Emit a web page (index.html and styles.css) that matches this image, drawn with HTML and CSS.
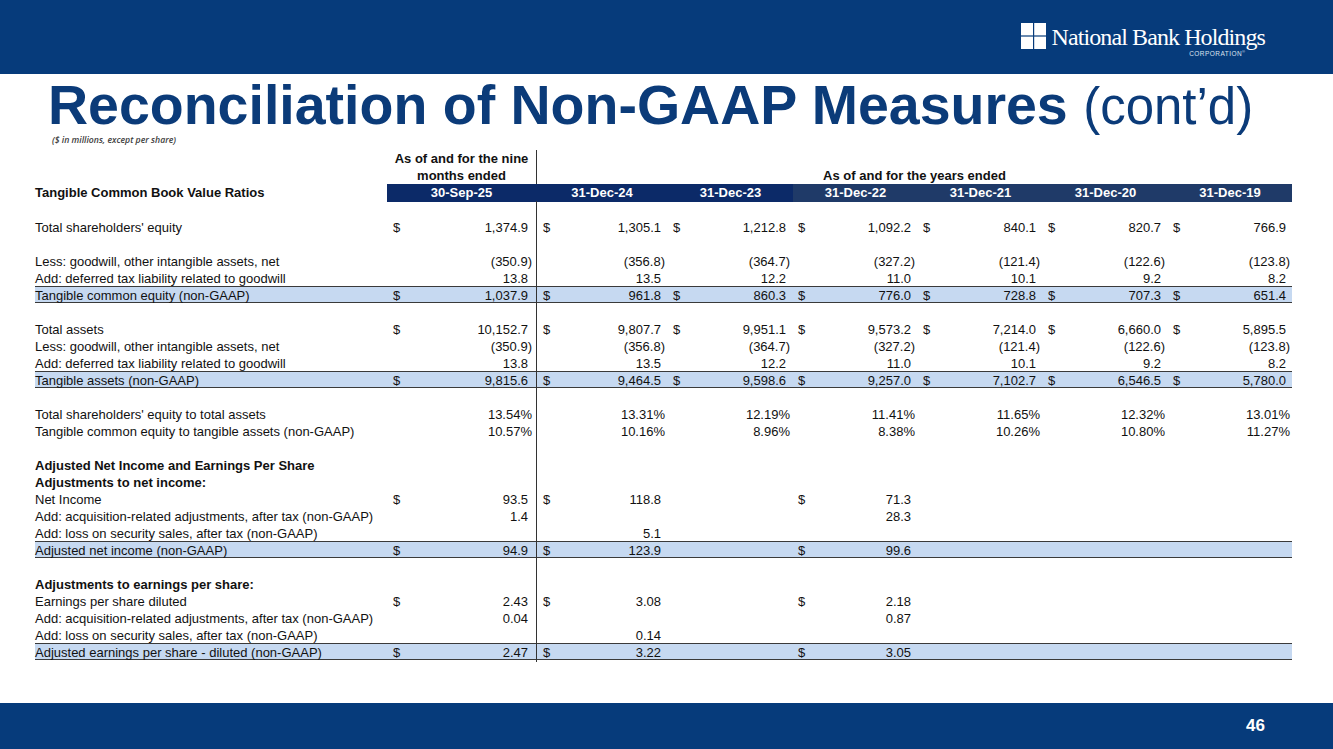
FILE: index.html
```html
<!DOCTYPE html>
<html lang="en">
<head>
<meta charset="utf-8">
<title>Reconciliation of Non-GAAP Measures (cont'd)</title>
<link rel="stylesheet" href="styles.css">
</head>
<body>
<header class="topbar">
  <div class="logo">
    <svg class="logo-mark" viewBox="0 0 25 26" aria-hidden="true">
      <rect x="0" y="0" width="12" height="12.4" fill="#fff"/>
      <rect x="13.2" y="0" width="11.8" height="12.4" fill="#fff"/>
      <rect x="0" y="13.6" width="12" height="12.4" fill="#fff"/>
      <rect x="13.2" y="13.6" width="11.8" height="12.4" fill="#fff"/>
    </svg>
    <div class="logo-text">
      <span class="logo-name">National Bank Holdings</span>
      <span class="logo-corp">CORPORATION<sup>®</sup></span>
    </div>
  </div>
</header>

<main class="content">
  <h1 class="title">Reconciliation of Non-GAAP Measures <span class="cont">(cont’d)</span></h1>
  <p class="note">($ in millions, except per share)</p>

  <div class="sheet">
    <div class="row hdr-top">
      <div class="lbl"></div>
      <div class="hc1">As of and for the nine<br>months ended</div>
      <div class="hspan">As of and for the years ended</div>
    </div>
    <div class="row bar">
      <div class="lbl b">Tangible Common Book Value Ratios</div>
      <div class="h dk">30-Sep-25</div>
      <div class="h dk">31-Dec-24</div>
      <div class="h dk">31-Dec-23</div>
      <div class="h lt">31-Dec-22</div>
      <div class="h lt">31-Dec-21</div>
      <div class="h lt">31-Dec-20</div>
      <div class="h lt">31-Dec-19</div>
    </div>

    <div class="row"><div class="lbl"></div><div class="m c1"></div><div class="m c2"></div><div class="m"></div><div class="m"></div><div class="m"></div><div class="m"></div><div class="m c7"></div></div>
    <div class="row"><div class="lbl">Total shareholders' equity</div><div class="m c1"><span>$</span><span class="v">1,374.9</span></div><div class="m c2"><span>$</span><span class="v">1,305.1</span></div><div class="m"><span>$</span><span class="v">1,212.8</span></div><div class="m"><span>$</span><span class="v">1,092.2</span></div><div class="m"><span>$</span><span class="v">840.1</span></div><div class="m"><span>$</span><span class="v">820.7</span></div><div class="m c7"><span>$</span><span class="v">766.9</span></div></div>
    <div class="row"><div class="lbl"></div><div class="m c1"></div><div class="m c2"></div><div class="m"></div><div class="m"></div><div class="m"></div><div class="m"></div><div class="m c7"></div></div>
    <div class="row"><div class="lbl">Less: goodwill, other intangible assets, net</div><div class="m c1"><span class="v n">(350.9)</span></div><div class="m c2"><span class="v n">(356.8)</span></div><div class="m"><span class="v n">(364.7)</span></div><div class="m"><span class="v n">(327.2)</span></div><div class="m"><span class="v n">(121.4)</span></div><div class="m"><span class="v n">(122.6)</span></div><div class="m c7"><span class="v n">(123.8)</span></div></div>
    <div class="row"><div class="lbl">Add: deferred tax liability related to goodwill</div><div class="m c1"><span class="v">13.8</span></div><div class="m c2"><span class="v">13.5</span></div><div class="m"><span class="v">12.2</span></div><div class="m"><span class="v">11.0</span></div><div class="m"><span class="v">10.1</span></div><div class="m"><span class="v">9.2</span></div><div class="m c7"><span class="v">8.2</span></div></div>
    <div class="row band"><div class="lbl">Tangible common equity (non-GAAP)</div><div class="m c1"><span>$</span><span class="v">1,037.9</span></div><div class="m c2"><span>$</span><span class="v">961.8</span></div><div class="m"><span>$</span><span class="v">860.3</span></div><div class="m"><span>$</span><span class="v">776.0</span></div><div class="m"><span>$</span><span class="v">728.8</span></div><div class="m"><span>$</span><span class="v">707.3</span></div><div class="m c7"><span>$</span><span class="v">651.4</span></div></div>
    <div class="row"><div class="lbl"></div><div class="m c1"></div><div class="m c2"></div><div class="m"></div><div class="m"></div><div class="m"></div><div class="m"></div><div class="m c7"></div></div>
    <div class="row"><div class="lbl">Total assets</div><div class="m c1"><span>$</span><span class="v">10,152.7</span></div><div class="m c2"><span>$</span><span class="v">9,807.7</span></div><div class="m"><span>$</span><span class="v">9,951.1</span></div><div class="m"><span>$</span><span class="v">9,573.2</span></div><div class="m"><span>$</span><span class="v">7,214.0</span></div><div class="m"><span>$</span><span class="v">6,660.0</span></div><div class="m c7"><span>$</span><span class="v">5,895.5</span></div></div>
    <div class="row"><div class="lbl">Less: goodwill, other intangible assets, net</div><div class="m c1"><span class="v n">(350.9)</span></div><div class="m c2"><span class="v n">(356.8)</span></div><div class="m"><span class="v n">(364.7)</span></div><div class="m"><span class="v n">(327.2)</span></div><div class="m"><span class="v n">(121.4)</span></div><div class="m"><span class="v n">(122.6)</span></div><div class="m c7"><span class="v n">(123.8)</span></div></div>
    <div class="row"><div class="lbl">Add: deferred tax liability related to goodwill</div><div class="m c1"><span class="v">13.8</span></div><div class="m c2"><span class="v">13.5</span></div><div class="m"><span class="v">12.2</span></div><div class="m"><span class="v">11.0</span></div><div class="m"><span class="v">10.1</span></div><div class="m"><span class="v">9.2</span></div><div class="m c7"><span class="v">8.2</span></div></div>
    <div class="row band"><div class="lbl">Tangible assets (non-GAAP)</div><div class="m c1"><span>$</span><span class="v">9,815.6</span></div><div class="m c2"><span>$</span><span class="v">9,464.5</span></div><div class="m"><span>$</span><span class="v">9,598.6</span></div><div class="m"><span>$</span><span class="v">9,257.0</span></div><div class="m"><span>$</span><span class="v">7,102.7</span></div><div class="m"><span>$</span><span class="v">6,546.5</span></div><div class="m c7"><span>$</span><span class="v">5,780.0</span></div></div>
    <div class="row"><div class="lbl"></div><div class="m c1"></div><div class="m c2"></div><div class="m"></div><div class="m"></div><div class="m"></div><div class="m"></div><div class="m c7"></div></div>
    <div class="row"><div class="lbl">Total shareholders' equity to total assets</div><div class="m c1"><span class="v n">13.54%</span></div><div class="m c2"><span class="v n">13.31%</span></div><div class="m"><span class="v n">12.19%</span></div><div class="m"><span class="v n">11.41%</span></div><div class="m"><span class="v n">11.65%</span></div><div class="m"><span class="v n">12.32%</span></div><div class="m c7"><span class="v n">13.01%</span></div></div>
    <div class="row"><div class="lbl">Tangible common equity to tangible assets (non-GAAP)</div><div class="m c1"><span class="v n">10.57%</span></div><div class="m c2"><span class="v n">10.16%</span></div><div class="m"><span class="v n">8.96%</span></div><div class="m"><span class="v n">8.38%</span></div><div class="m"><span class="v n">10.26%</span></div><div class="m"><span class="v n">10.80%</span></div><div class="m c7"><span class="v n">11.27%</span></div></div>
    <div class="row"><div class="lbl"></div><div class="m c1"></div><div class="m c2"></div><div class="m"></div><div class="m"></div><div class="m"></div><div class="m"></div><div class="m c7"></div></div>
    <div class="row"><div class="lbl b">Adjusted Net Income and Earnings Per Share</div><div class="m c1"></div><div class="m c2"></div><div class="m"></div><div class="m"></div><div class="m"></div><div class="m"></div><div class="m c7"></div></div>
    <div class="row"><div class="lbl b">Adjustments to net income:</div><div class="m c1"></div><div class="m c2"></div><div class="m"></div><div class="m"></div><div class="m"></div><div class="m"></div><div class="m c7"></div></div>
    <div class="row"><div class="lbl">Net Income</div><div class="m c1"><span>$</span><span class="v">93.5</span></div><div class="m c2"><span>$</span><span class="v">118.8</span></div><div class="m"></div><div class="m"><span>$</span><span class="v">71.3</span></div><div class="m"></div><div class="m"></div><div class="m c7"></div></div>
    <div class="row"><div class="lbl">Add: acquisition-related adjustments, after tax (non-GAAP)</div><div class="m c1"><span class="v">1.4</span></div><div class="m c2"></div><div class="m"></div><div class="m"><span class="v">28.3</span></div><div class="m"></div><div class="m"></div><div class="m c7"></div></div>
    <div class="row"><div class="lbl">Add: loss on security sales, after tax (non-GAAP)</div><div class="m c1"></div><div class="m c2"><span class="v">5.1</span></div><div class="m"></div><div class="m"></div><div class="m"></div><div class="m"></div><div class="m c7"></div></div>
    <div class="row band"><div class="lbl">Adjusted net income (non-GAAP)</div><div class="m c1"><span>$</span><span class="v">94.9</span></div><div class="m c2"><span>$</span><span class="v">123.9</span></div><div class="m"></div><div class="m"><span>$</span><span class="v">99.6</span></div><div class="m"></div><div class="m"></div><div class="m c7"></div></div>
    <div class="row"><div class="lbl"></div><div class="m c1"></div><div class="m c2"></div><div class="m"></div><div class="m"></div><div class="m"></div><div class="m"></div><div class="m c7"></div></div>
    <div class="row"><div class="lbl b">Adjustments to earnings per share:</div><div class="m c1"></div><div class="m c2"></div><div class="m"></div><div class="m"></div><div class="m"></div><div class="m"></div><div class="m c7"></div></div>
    <div class="row"><div class="lbl">Earnings per share diluted</div><div class="m c1"><span>$</span><span class="v">2.43</span></div><div class="m c2"><span>$</span><span class="v">3.08</span></div><div class="m"></div><div class="m"><span>$</span><span class="v">2.18</span></div><div class="m"></div><div class="m"></div><div class="m c7"></div></div>
    <div class="row"><div class="lbl">Add: acquisition-related adjustments, after tax (non-GAAP)</div><div class="m c1"><span class="v">0.04</span></div><div class="m c2"></div><div class="m"></div><div class="m"><span class="v">0.87</span></div><div class="m"></div><div class="m"></div><div class="m c7"></div></div>
    <div class="row"><div class="lbl">Add: loss on security sales, after tax (non-GAAP)</div><div class="m c1"></div><div class="m c2"><span class="v">0.14</span></div><div class="m"></div><div class="m"></div><div class="m"></div><div class="m"></div><div class="m c7"></div></div>
    <div class="row band"><div class="lbl">Adjusted earnings per share - diluted (non-GAAP)</div><div class="m c1"><span>$</span><span class="v">2.47</span></div><div class="m c2"><span>$</span><span class="v">3.22</span></div><div class="m"></div><div class="m"><span>$</span><span class="v">3.05</span></div><div class="m"></div><div class="m"></div><div class="m c7"></div></div>
  </div>
</main>

<footer class="footbar">
  <span class="page">46</span>
</footer>
</body>
</html>
```

FILE: styles.css
```css
html, body {
  margin: 0;
  padding: 0;
}

body {
  width: 1333px;
  height: 749px;
  overflow: hidden;
  display: flex;
  flex-direction: column;
  background: #ffffff;
  font-family: "Liberation Sans", Arial, sans-serif;
}

/* ---------- top bar + logo ---------- */
.topbar {
  flex: none;
  height: 74px;
  box-sizing: border-box;
  background: #063b7b;
  display: flex;
  justify-content: flex-end;
  align-items: flex-start;
  padding: 23px 68px 0 0;
}

.logo {
  display: flex;
  align-items: flex-start;
  gap: 5px;
}

.logo-mark {
  display: block;
  width: 25px;
  height: 26px;
}

.logo-text {
  display: flex;
  flex-direction: column;
  align-items: flex-end;
  margin-top: 2px;
}

.logo-name {
  font-family: "Liberation Serif", "Times New Roman", serif;
  font-size: 24px;
  line-height: 24px;
  letter-spacing: -0.9px;
  color: #ffffff;
  white-space: nowrap;
}

.logo-corp {
  font-family: "Liberation Sans", Arial, sans-serif;
  font-size: 6.5px;
  line-height: 7px;
  letter-spacing: 0.45px;
  color: #dce4ef;
  margin: 1px 20px 0 0;
  white-space: nowrap;
}

.logo-corp sup {
  font-size: 4px;
  line-height: 4px;
  letter-spacing: 0;
  vertical-align: top;
}

/* ---------- content ---------- */
.content {
  flex: 1;
}

.title {
  margin: 0;
  padding-left: 48px;
  font-size: 55.5px;
  line-height: 63px;
  font-weight: 700;
  color: #0b3b79;
  white-space: nowrap;
}

.title .cont {
  font-weight: 400;
  font-size: 51px;
}

.note {
  margin: -3px 0 0;
  padding-left: 52px;
  font-family: "Open Sans", "Liberation Sans", sans-serif;
  font-style: italic;
  font-weight: 600;
  font-size: 8.7px;
  line-height: 10px;
  color: #3c3c3c;
}

/* ---------- spreadsheet ---------- */
.sheet {
  margin: 5px 0 0 35px;
  width: 1257px;
  font-size: 13px;
  color: #111111;
}

.row {
  display: grid;
  grid-template-columns: 352px 149px 132px 125px 125px 125px 125px 124px;
  height: 17px;
  line-height: 19px;
}

.lbl {
  white-space: nowrap;
}

.b {
  font-weight: 700;
}

.hdr-top {
  height: 34px;
  line-height: 17px;
  grid-template-rows: 17px 17px;
}

.hdr-top .lbl {
  grid-row: 1 / 3;
}

.hdr-top .hc1 {
  grid-column: 2 / 3;
  grid-row: 1 / 3;
  text-align: center;
  font-weight: 700;
  white-space: nowrap;
}

.hdr-top .hspan {
  grid-column: 3 / 9;
  grid-row: 1 / 3;
  border-left: 1px solid #333333;
  display: flex;
  align-items: flex-end;
  justify-content: center;
  font-weight: 700;
  white-space: nowrap;
}

.bar {
  line-height: 18px;
}

.bar .h {
  color: #ffffff;
  font-weight: 700;
  text-align: center;
  white-space: nowrap;
}

.bar .dk {
  background: #0c2a68;
}

.bar .lt {
  background: #1f3a68;
}

.m {
  display: flex;
  box-sizing: border-box;
  padding: 0 3px 0 5px;
  white-space: nowrap;
}

.m.c1 {
  padding-left: 6px;
  padding-right: 4px;
}

.m.c2 {
  border-left: 1px solid #333333;
  padding-left: 6px;
}

.m.c7 {
  padding-right: 2px;
}

.v {
  margin-left: auto;
  padding-right: 4px;
}

.v.n {
  padding-right: 0;
}

.band {
  background: #c6d9f1;
  box-shadow: inset 0 1px 0 #3a3a3a, inset 0 -1px 0 #3a3a3a;
}

/* ---------- footer ---------- */
.footbar {
  flex: none;
  height: 46px;
  background: #063b7b;
  display: flex;
  justify-content: flex-end;
  align-items: center;
  padding-right: 68px;
}

.page {
  color: #ffffff;
  font-weight: 700;
  font-size: 17px;
}
```
